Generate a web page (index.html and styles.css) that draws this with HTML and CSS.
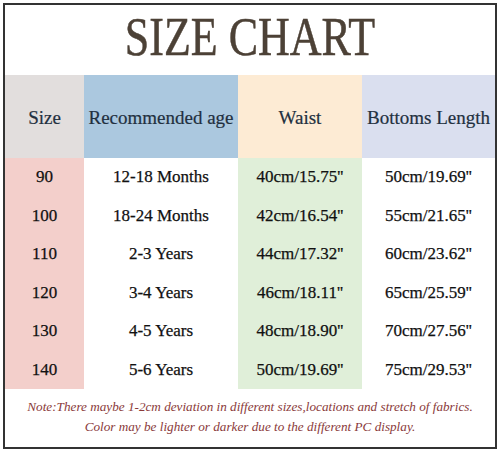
FILE: index.html
```html
<!DOCTYPE html>
<html lang="en">
<head>
    <meta charset="UTF-8">
    <meta name="viewport" content="width=device-width, initial-scale=1.0">
    <title>Size Chart</title>
    <link rel="stylesheet" href="styles.css">
</head>
<body>
    <div class="chart">
        <h1 class="title"><span>SIZE CHART</span></h1>
        <div class="table">
            <div class="head c-size">Size</div>
            <div class="head c-age">Recommended age</div>
            <div class="head c-waist">Waist</div>
            <div class="head c-length">Bottoms Length</div>

            <div class="cell c-size">90</div>
            <div class="cell">12-18 Months</div>
            <div class="cell c-waist">40cm/15.75''</div>
            <div class="cell">50cm/19.69''</div>

            <div class="cell c-size">100</div>
            <div class="cell">18-24 Months</div>
            <div class="cell c-waist">42cm/16.54''</div>
            <div class="cell">55cm/21.65''</div>

            <div class="cell c-size">110</div>
            <div class="cell">2-3 Years</div>
            <div class="cell c-waist">44cm/17.32''</div>
            <div class="cell">60cm/23.62''</div>

            <div class="cell c-size">120</div>
            <div class="cell">3-4 Years</div>
            <div class="cell c-waist">46cm/18.11''</div>
            <div class="cell">65cm/25.59''</div>

            <div class="cell c-size">130</div>
            <div class="cell">4-5 Years</div>
            <div class="cell c-waist">48cm/18.90''</div>
            <div class="cell">70cm/27.56''</div>

            <div class="cell c-size">140</div>
            <div class="cell">5-6 Years</div>
            <div class="cell c-waist">50cm/19.69''</div>
            <div class="cell">75cm/29.53''</div>
        </div>
        <div class="note">
            <p>Note:There maybe 1-2cm deviation in different sizes,locations and stretch of fabrics.</p>
            <p>Color may be lighter or darker due to the different PC display.</p>
        </div>
    </div>
</body>
</html>
```

FILE: styles.css
```css
body {
    margin: 0;
    padding: 0;
    background-color: white;
    font-family: 'Liberation Serif', serif;
    color: #111;
}

.chart {
    margin: 3px;
    width: 490px;
    height: 442px;
    border: 2px solid #333;
    display: flex;
    flex-direction: column;
}

.title {
    margin: 0;
    height: 70px;
    box-sizing: border-box;
    padding-bottom: 8px;
    display: flex;
    align-items: center;
    justify-content: center;
    font-size: 44px;
    font-weight: normal;
    color: #4c4136;
}

.title span {
    display: inline-block;
    transform: scaleY(1.27);
    -webkit-text-stroke: 0.4px #4c4136;
}

.table {
    display: grid;
    grid-template-columns: 79px 154px 124px 133px;
    grid-template-rows: 83px repeat(6, 38.5px);
}

.head, .cell {
    display: flex;
    align-items: center;
    justify-content: center;
    white-space: nowrap;
}

.head {
    font-size: 19px;
    color: #22303f;
    padding-top: 2px;
    -webkit-text-stroke: 0.2px #22303f;
}

.cell {
    font-size: 17px;
    -webkit-text-stroke: 0.25px #111;
}

.head.c-size { background-color: #e2dedd; }
.head.c-age { background-color: #abc8df; }
.head.c-waist { background-color: #fdebd4; }
.head.c-length { background-color: #dadfef; }

.cell.c-size { background-color: #f3cfcb; }
.cell.c-waist { background-color: #e0efd9; }

.note {
    flex-grow: 1;
    display: flex;
    flex-direction: column;
    justify-content: center;
    padding-bottom: 2px;
}

.note p {
    margin: 0;
    text-align: center;
    font-style: italic;
    font-size: 13.2px;
    line-height: 20px;
    color: #8a3a3a;
}
```
